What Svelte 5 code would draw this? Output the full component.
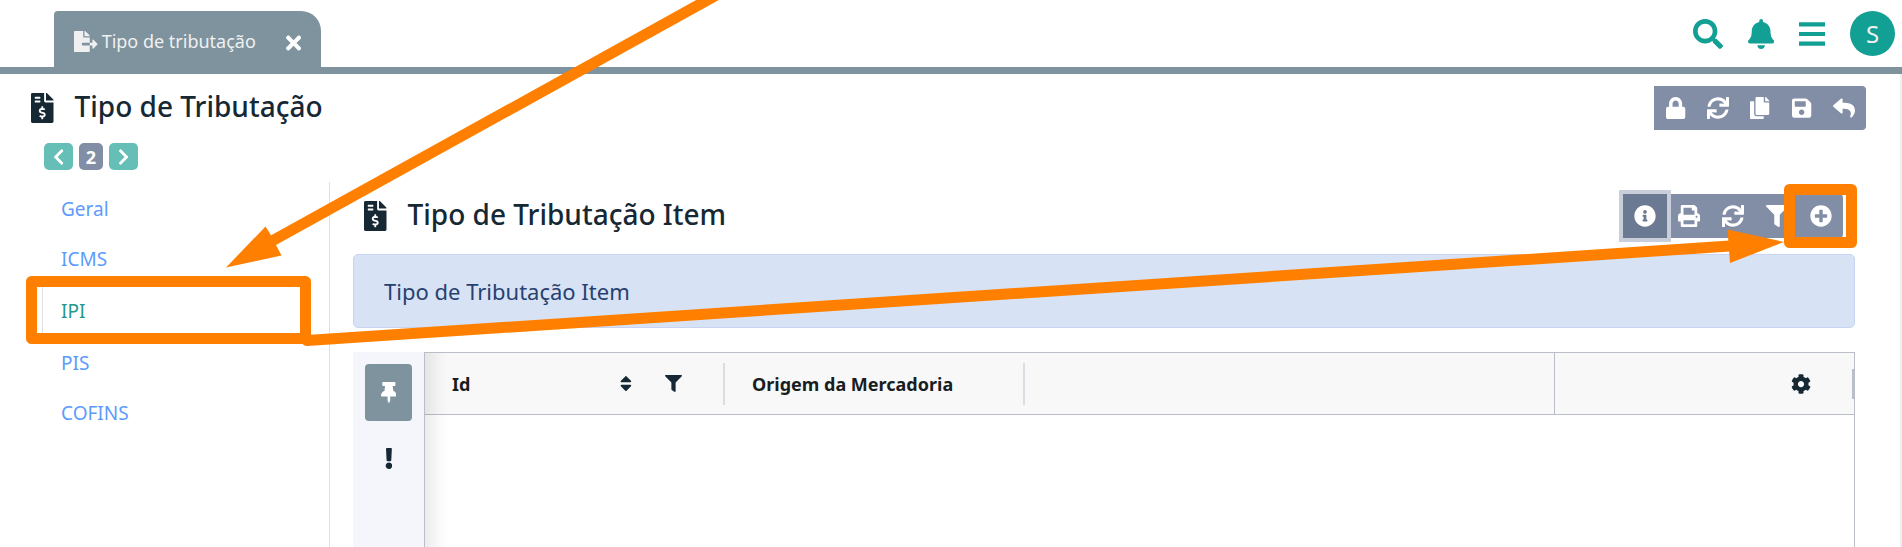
<script>
  const icons = {
    fileExport: { w: 576, d: 'M384 121.9c0-6.3-2.5-12.4-7-16.9L279.1 7c-4.5-4.500-10.600-7-17-7H256v128h128zM571 308l-95.700-96.400c-10.100-10.100-27.400-3-27.400 11.300V288h-64v64h64v65.200c0 14.300 17.300 21.400 27.400 11.300L571 332c6.600-6.600 6.600-17.400 0-24zm-379 28v-32c0-8.800 7.200-16 16-16h176V160H248c-13.200 0-24-10.800-24-24V0H24C10.700 0 0 10.700 0 24v464c0 13.300 10.700 24 24 24h336c13.300 0 24-10.700 24-24V352H208c-8.800 0-16-7.200-16-16z' },
    close: { w: 352, d: 'M242.72 256l100.07-100.07c12.28-12.28 12.28-32.19 0-44.48l-22.24-22.24c-12.28-12.28-32.19-12.28-44.48 0L176 189.28 75.93 89.21c-12.28-12.28-32.19-12.28-44.48 0L9.21 111.45c-12.28 12.28-12.28 32.19 0 44.48L109.28 256 9.21 356.07c-12.28 12.28-12.28 32.19 0 44.48l22.24 22.24c12.28 12.28 32.2 12.28 44.48 0L176 322.72l100.07 100.07c12.28 12.28 32.2 12.28 44.48 0l22.24-22.24c12.28-12.28 12.28-32.19 0-44.48L242.72 256z' },
    search: { w: 512, d: 'M505 442.7L405.3 343c-4.5-4.5-10.6-7-17-7H372c27.6-35.3 44-79.700 44-128C416 93.100 322.900 0 208 0S0 93.100 0 208s93.100 208 208 208c48.300 0 92.700-16.400 128-44v16.300c0 6.400 2.500 12.500 7 17l99.700 99.700c9.400 9.400 24.600 9.400 33.900 0l28.300-28.300c9.400-9.400 9.400-24.600.1-34zM208 336c-70.700 0-128-57.200-128-128 0-70.700 57.200-128 128-128 70.700 0 128 57.200 128 128 0 70.700-57.200 128-128 128z' },
    bell: { w: 448, d: 'M224 512c35.320 0 63.970-28.650 63.970-64H160.030c0 35.350 28.650 64 63.970 64zm215.390-149.710c-19.320-20.760-55.470-51.990-55.470-154.290 0-77.700-54.480-139.900-127.940-155.160V32c0-17.670-14.320-32-31.980-32s-31.980 14.330-31.980 32v20.840C118.560 68.100 64.080 130.300 64.080 208c0 102.300-36.150 133.530-55.470 154.290-6 6.450-8.660 14.160-8.610 21.710.11 16.400 12.980 32 32.100 32h383.800c19.120 0 32-15.600 32.100-32 .05-7.550-2.610-15.270-8.610-21.710z' },
    bars: { w: 448, d: 'M0 56h448v72H0zM0 220h448v72H0zM0 384h448v72H0z' },
    invoice: { w: 384, d: 'M377 105L279.100 7c-4.500-4.500-10.600-7-17-7H256v128h128v-6.100c0-6.300-2.500-12.400-7-16.900zm-153 31V0H24C10.700 0 0 10.700 0 24v464c0 13.300 10.700 24 24 24h336c13.300 0 24-10.700 24-24V160H248c-13.200 0-24-10.800-24-24zM64 72c0-4.420 3.580-8 8-8h80c4.420 0 8 3.580 8 8v16c0 4.420-3.580 8-8 8H72c-4.420 0-8-3.580-8-8V72zm0 80v-16c0-4.420 3.580-8 8-8h80c4.420 0 8 3.580 8 8v16c0 4.420-3.580 8-8 8H72c-4.420 0-8-3.580-8-8zm144 263.880V440c0 4.420-3.580 8-8 8h-16c-4.420 0-8-3.580-8-8v-24.290c-11.290-.58-22.270-4.520-31.370-11.350-3.900-2.930-4.100-8.770-.57-12.140l11.750-11.210c2.770-2.640 6.890-2.760 10.130-.73 3.870 2.420 8.260 3.720 12.820 3.720h28.110c6.500 0 11.800-5.920 11.800-13.190 0-5.950-3.610-11.190-8.770-12.730l-45-13.500c-18.590-5.580-31.580-23.420-31.580-43.390 0-24.520 19.050-44.440 42.670-45.070V232c0-4.420 3.580-8 8-8h16c4.420 0 8 3.580 8 8v24.290c11.290.58 22.270 4.510 31.370 11.350 3.900 2.930 4.100 8.770.57 12.140l-11.750 11.210c-2.770 2.640-6.890 2.760-10.130.73-3.870-2.430-8.260-3.720-12.820-3.720h-28.110c-6.500 0-11.800 5.920-11.800 13.190 0 5.950 3.610 11.190 8.770 12.730l45 13.500c18.590 5.580 31.580 23.420 31.580 43.390 0 24.530-19.050 44.440-42.670 45.070z' },
    lock: { w: 448, d: 'M400 224h-24v-72C376 68.200 307.800 0 224 0S72 68.200 72 152v72H48c-26.500 0-48 21.500-48 48v192c0 26.500 21.500 48 48 48h352c26.500 0 48-21.500 48-48V272c0-26.500-21.500-48-48-48zm-104 0H152v-72c0-39.700 32.300-72 72-72s72 32.300 72 72v72z' },
    sync: { w: 512, d: 'M440.650 12.570l4 82.770A247.160 247.160 0 0 0 255.830 8C134.730 8 33.910 94.920 12.290 209.820A12 12 0 0 0 24.090 224h49.050a12 12 0 0 0 11.670-9.260 175.910 175.910 0 0 1 317-56.940l-101.460-4.860a12 12 0 0 0-12.570 12v47.410a12 12 0 0 0 12 12H500a12 12 0 0 0 12-12V12a12 12 0 0 0-12-12h-47.370a12 12 0 0 0-11.980 12.570zM255.830 432a175.610 175.610 0 0 1-146-77.800l101.800 4.870a12 12 0 0 0 12.570-12v-47.400a12 12 0 0 0-12-12H12a12 12 0 0 0-12 12V500a12 12 0 0 0 12 12h47.350a12 12 0 0 0 12-12.600l-4.150-82.570A247.170 247.170 0 0 0 255.830 504c121.110 0 221.930-86.920 243.550-201.820a12 12 0 0 0-11.800-14.180h-49.050a12 12 0 0 0-11.670 9.260A175.860 175.860 0 0 1 255.830 432z' },
    copy: { w: 448, d: 'M320 448v40c0 13.255-10.745 24-24 24H24c-13.255 0-24-10.745-24-24V120c0-13.255 10.745-24 24-24h72v296c0 30.879 25.121 56 56 56h168zm0-344V0H152c-13.255 0-24 10.745-24 24v368c0 13.255 10.745 24 24 24h272c13.255 0 24-10.745 24-24V128H344c-13.200 0-24-10.800-24-24zm120.971-31.029L375.029 7.029A24 24 0 0 0 358.059 0H352v96h96v-6.059a24 24 0 0 0-7.029-16.970z' },
    save: { w: 448, d: 'M433.941 129.941l-83.882-83.882A48 48 0 0 0 316.118 32H48C21.490 32 0 53.490 0 80v352c0 26.510 21.490 48 48 48h352c26.510 0 48-21.490 48-48V163.882a48 48 0 0 0-14.059-33.941zM224 416c-35.346 0-64-28.654-64-64 0-35.346 28.654-64 64-64s64 28.654 64 64c0 35.346-28.654 64-64 64zm96-304.520V212c0 6.627-5.373 12-12 12H76c-6.627 0-12-5.373-12-12V108c0-6.627 5.373-12 12-12h228.520c3.183 0 6.235 1.264 8.485 3.515l3.480 3.480A11.996 11.996 0 0 1 320 111.480z' },
    reply: { w: 512, d: 'M8.309 189.836L184.313 37.851C199.719 24.546 224 35.347 224 56.015v80.053c160.629 1.839 288 34.032 288 186.258 0 61.441-39.581 122.309-83.333 154.132-13.653 9.931-33.111-2.533-28.077-18.631 45.344-145.012-21.507-183.510-176.590-185.742V360c0 20.700-24.300 31.453-39.687 18.164l-176.004-152c-11.071-9.562-11.086-26.753 0-36.328z' },
    info: { w: 512, d: 'M256 8C119.043 8 8 119.083 8 256c0 136.997 111.043 248 248 248s248-111.003 248-248C504 119.083 392.957 8 256 8zm0 110c23.196 0 42 18.804 42 42s-18.804 42-42 42-42-18.804-42-42 18.804-42 42-42zm56 254c0 6.627-5.373 12-12 12h-88c-6.627 0-12-5.373-12-12v-24c0-6.627 5.373-12 12-12h12v-64h-12c-6.627 0-12-5.373-12-12v-24c0-6.627 5.373-12 12-12h64c6.627 0 12 5.373 12 12v100h12c6.627 0 12 5.373 12 12v24z' },
    print: { w: 512, d: 'M448 192V77.250c0-8.490-3.370-16.620-9.370-22.630L393.370 9.370c-6-6-14.140-9.370-22.630-9.370H96C78.330 0 64 14.330 64 32v160c-35.350 0-64 28.650-64 64v112c0 8.840 7.160 16 16 16h48v96c0 17.670 14.330 32 32 32h320c17.670 0 32-14.330 32-32v-96h48c8.840 0 16-7.160 16-16V256c0-35.350-28.650-64-64-64zm-64 256H128v-96h256v96zm0-224H128V64h192v48c0 8.840 7.160 16 16 16h48v96zm48 72c-13.250 0-24-10.750-24-24 0-13.260 10.750-24 24-24s24 10.740 24 24c0 13.250-10.750 24-24 24z' },
    filter: { w: 512, d: 'M487.976 0H24.028C2.710 0-8.047 25.866 7.058 40.971L192 225.941V432c0 7.831 3.821 15.170 10.237 19.662l80 55.980C298.020 518.690 320 507.493 320 487.980V225.941l184.947-184.970C520.021 25.896 509.338 0 487.976 0z' },
    plus: { w: 512, d: 'M256 8C119 8 8 119 8 256s111 248 248 248 248-111 248-248S393 8 256 8zm144 276c0 6.600-5.400 12-12 12h-92v92c0 6.600-5.400 12-12 12h-56c-6.600 0-12-5.400-12-12v-92h-92c-6.600 0-12-5.400-12-12v-56c0-6.600 5.400-12 12-12h92v-92c0-6.600 5.400-12 12-12h56c6.600 0 12 5.400 12 12v92h92c6.600 0 12 5.400 12 12v56z' },
    pin: { w: 384, d: 'M298.028 214.267L285.793 96H328c13.255 0 24-10.745 24-24V24c0-13.255-10.745-24-24-24H56C42.745 0 32 10.745 32 24v48c0 13.255 10.745 24 24 24h42.207L85.972 214.267C37.465 236.820 0 277.261 0 328c0 13.255 10.745 24 24 24h136v104.007c0 1.242.289 2.467.845 3.578l24 48c2.941 5.882 11.364 5.893 14.311 0l24-48a8.008 8.008 0 0 0 .845-3.578V352h136c13.255 0 24-10.745 24-24-.001-51.183-37.983-91.420-85.973-113.733z' },
    exclamation: { w: 192, d: 'M176 432c0 44.112-35.888 80-80 80s-80-35.888-80-80 35.888-80 80-80 80 35.888 80 80zM25.260 25.199l13.600 272C39.499 309.972 50.041 320 62.830 320h66.340c12.789 0 23.331-10.028 23.970-22.801l13.600-272C167.425 11.490 156.496 0 142.770 0H49.230C35.504 0 24.575 11.490 25.260 25.199z' },
    sort: { w: 320, d: 'M41 288h238c21.400 0 32.100 25.900 17 41L177 448c-9.400 9.400-24.600 9.400-33.900 0L24 329c-15.100-15.100-4.400-41 17-41zm255-105L177 64c-9.400-9.400-24.600-9.400-33.900 0L24 183c-15.100 15.100-4.400 41 17 41h238c21.400 0 32.100-25.900 17-41z' },
    cog: { w: 512, d: 'M487.400 315.700l-42.600-24.600c4.300-23.200 4.300-47 0-70.200l42.600-24.600c4.900-2.800 7.100-8.600 5.500-14-11.100-35.600-30-67.800-54.700-94.600-3.800-4.100-10-5.100-14.800-2.300L380.800 110c-17.900-15.400-38.500-27.300-60.800-35.100V25.800c0-5.600-3.900-10.500-9.400-11.700-36.700-8.200-74.300-7.800-109.200 0-5.500 1.200-9.400 6.100-9.400 11.700V75c-22.200 7.900-42.800 19.800-60.800 35.100L88.700 85.500c-4.900-2.800-11-1.900-14.800 2.300-24.700 26.700-43.600 58.900-54.700 94.600-1.700 5.400.6 11.200 5.500 14L67.300 221c-4.300 23.200-4.300 47 0 70.200l-42.600 24.600c-4.900 2.800-7.100 8.600-5.500 14 11.100 35.600 30 67.800 54.700 94.600 3.800 4.100 10 5.100 14.800 2.300l42.600-24.600c17.900 15.400 38.500 27.300 60.800 35.100v49.200c0 5.600 3.900 10.500 9.400 11.700 36.700 8.200 74.300 7.800 109.200 0 5.500-1.200 9.400-6.100 9.400-11.700v-49.200c22.200-7.900 42.800-19.800 60.800-35.100l42.600 24.600c4.900 2.800 11 1.900 14.800-2.300 24.700-26.700 43.600-58.900 54.700-94.600 1.500-5.500-.7-11.300-5.600-14.100zM256 336c-44.100 0-80-35.900-80-80s35.900-80 80-80 80 35.900 80 80-35.900 80-80 80z' },
    left: { w: 320, d: 'M34.520 239.030L228.870 44.690c9.370-9.370 24.570-9.370 33.940 0l22.670 22.670c9.360 9.360 9.370 24.520.04 33.900L131.490 256l154.020 154.750c9.340 9.380 9.320 24.540-.04 33.900l-22.670 22.670c-9.370 9.370-24.570 9.370-33.940 0L34.520 272.970c-9.370-9.370-9.370-24.570 0-33.940z' },
    right: { w: 320, d: 'M285.476 272.971L91.132 467.314c-9.373 9.373-24.569 9.373-33.941 0l-22.667-22.667c-9.357-9.357-9.375-24.522-.04-33.901L188.505 256 34.484 101.255c-9.335-9.379-9.317-24.544.04-33.901l22.667-22.667c9.373-9.373 24.569-9.373 33.941 0L285.475 239.030c9.373 9.372 9.373 24.568.001 33.941z' }
  };

  const pageActions = [
    ['lock', 'Bloquear'], ['sync', 'Atualizar'], ['copy', 'Copiar'], ['save', 'Salvar'], ['reply', 'Voltar']
  ];
  const itemActions = [
    ['info', 'Informações'], ['print', 'Imprimir'], ['sync', 'Atualizar'], ['filter', 'Filtrar'], ['plus', 'Adicionar']
  ];
  const sections = ['Geral', 'ICMS', 'IPI', 'PIS', 'COFINS'];
  let active = $state('IPI');
</script>

{#snippet icon(name, size)}
  <svg class="icon" height={size} viewBox="0 0 {icons[name].w} 512" aria-hidden="true"><path d={icons[name].d} /></svg>
{/snippet}

<div class="app">
  <header class="topbar">
    <div class="tab">
      {@render icon('fileExport', 21)}
      <span class="tab-name">Tipo de tributação</span>
      <button class="plain tab-close" aria-label="Fechar">{@render icon('close', 22)}</button>
    </div>
    <div class="tools">
      <button class="plain" aria-label="Pesquisar">{@render icon('search', 30)}</button>
      <button class="plain" aria-label="Notificações">{@render icon('bell', 30)}</button>
      <button class="plain" aria-label="Menu">{@render icon('bars', 30)}</button>
      <button class="avatar">S</button>
    </div>
  </header>

  <div class="page">
    <div class="heading">
      {@render icon('invoice', 30)}
      <h1>Tipo de Tributação</h1>
      <div class="toolbar">
        {#each pageActions as [name, label]}
          <button aria-label={label}>{@render icon(name, 22)}</button>
        {/each}
      </div>
    </div>

    <div class="pager">
      <button aria-label="Anterior">{@render icon('left', 18)}</button>
      <span>2</span>
      <button aria-label="Próximo">{@render icon('right', 18)}</button>
    </div>

    <div class="columns">
      <nav>
        {#each sections as name}
          <a href="#{name}" class:active={active === name} onclick={() => (active = name)}>{name}</a>
        {/each}
      </nav>

      <main>
        <div class="heading sub">
          {@render icon('invoice', 30)}
          <h2>Tipo de Tributação Item</h2>
          <div class="toolbar wide">
            {#each itemActions as [name, label]}
              <button class:pressed={name === 'info'} aria-label={label}>{@render icon(name, 22)}</button>
            {/each}
          </div>
        </div>

        <div class="notice">Tipo de Tributação Item</div>

        <div class="grid">
          <div class="rail">
            <button class="pinned" aria-label="Fixar">{@render icon('pin', 21)}</button>
            <button class="plain" aria-label="Alertas">{@render icon('exclamation', 21)}</button>
          </div>
          <div class="sheet">
            <table>
              <colgroup><col class="c-id" /><col class="c-origin" /><col /><col class="c-config" /></colgroup>
              <thead>
                <tr>
                  <th>
                    <div class="cell">
                      <span>Id</span>
                      <button class="plain sort" aria-label="Ordenar">{@render icon('sort', 19)}</button>
                      <button class="plain" aria-label="Filtrar coluna">{@render icon('filter', 17)}</button>
                    </div>
                  </th>
                  <th><div class="cell">Origem da Mercadoria</div></th>
                  <th></th>
                  <th class="config">
                    <div class="cell end">
                      <button class="plain" aria-label="Configurar colunas">{@render icon('cog', 20)}</button>
                    </div>
                  </th>
                </tr>
              </thead>
            </table>
          </div>
        </div>
      </main>
    </div>
  </div>

  <svg class="marks" width="1902" height="547" aria-hidden="true">
    <g fill="none" stroke="#ff8000" stroke-width="11" stroke-linejoin="round">
      <rect x="31.500" y="281.500" width="274" height="57" />
      <rect x="1789.500" y="189.500" width="62" height="53" />
      <path d="M722 -8L272 241" />
      <path d="M307 340.500L1730 246" stroke-linecap="round" />
    </g>
    <g fill="#ff8000">
      <path d="M226 267.500L265.500 226.500L271.500 236L276 245L281.500 255.500Z" />
      <path d="M1784 242L1727.500 229.500L1730 263Z" />
    </g>
  </svg>
</div>

<style>
  :global(body) { margin: 0; background: #fff; }
  .app {
    position: relative;
    display: flex;
    flex-direction: column;
    min-height: 100vh;
    overflow: hidden;
    font-family: "Noto Sans", "Open Sans", sans-serif;
    font-size: 18px;
    color: #152834;
  }
  .icon { display: block; flex: none; fill: currentColor; }
  button { font: inherit; color: inherit; border: 0; padding: 0; cursor: pointer; }
  .plain { background: none; display: flex; }

  .topbar {
    display: flex;
    align-items: flex-end;
    justify-content: space-between;
    height: 67px;
    padding: 0 7px 0 54px;
    border-bottom: 7px solid #7e939e;
  }
  .tab {
    display: flex;
    align-items: center;
    height: 56px;
    padding: 4px 20px 0;
    box-sizing: border-box;
    background: #7e939e;
    color: #f0f0f0;
    border-radius: 4px 20px 0 0;
  }
  .tab-name { margin-left: 4px; }
  .tab-close { margin-left: 30px; padding-top: 4px; color: #fff; }
  .tools { display: flex; align-items: center; align-self: center; gap: 25px; color: #129f94; }
  .avatar {
    width: 45px;
    height: 45px;
    border-radius: 50%;
    background: #129f94;
    color: #f0f0f0;
    font-size: 24px;
  }

  .page {
    flex: 1;
    display: flex;
    flex-direction: column;
    border-right: 2px solid #efeff1;
  }
  .heading { display: flex; align-items: center; padding: 12px 34px 0 31px; }
  h1, h2 { margin: 0 0 0 21px; padding-bottom: 4px; font-size: 28px; line-height: 40px; font-weight: 500; }
  .toolbar {
    display: flex;
    margin-left: auto;
    padding: 0 1px;
    height: 44px;
    background: #828ea5;
    color: #fff;
    border-radius: 0 4px 4px 0;
  }
  .toolbar button {
    display: flex;
    align-items: center;
    justify-content: center;
    width: 42px;
    background: none;
  }
  .toolbar.wide { padding: 0; }
  .toolbar.wide button { width: 44px; }
  .toolbar .pressed { background: #6b7a92; box-shadow: 0 0 0 4px #c9cfda; }

  .pager { display: flex; gap: 6px; padding: 13px 44px 12px; }
  .pager button, .pager span {
    display: flex;
    align-items: center;
    justify-content: center;
    width: 29px;
    height: 27px;
    border-radius: 5px;
    background: #65bfb7;
    color: #fff;
  }
  .pager span { width: 24px; background: #828ea5; font-weight: 700; }

  .columns { flex: 1; display: flex; }
  nav {
    display: flex;
    flex-direction: column;
    width: 287px;
    padding-top: 2px;
    margin-left: 42px;
    border-right: 1px solid #dee2e6;
  }
  nav a {
    padding: 0 18px;
    border: 1px solid transparent;
    border-right: 0;
    border-radius: 4px 0 0 4px;
    line-height: 48px;
    font-size: 19px;
    color: #5c9bfd;
    text-decoration: none;
  }
  nav a.active { line-height: 52px; border-left-color: #dee2e6; color: #23988d; }

  main { flex: 1; display: flex; flex-direction: column; padding: 0 45px 0 23px; }
  .heading.sub { padding: 12px 12px 0 11px; }
  .notice {
    margin-top: 16px;
    padding: 0 30px;
    border: 1px solid #c8d4f1;
    border-radius: 5px;
    background: #d8e2f5;
    color: #26416f;
    font-size: 22px;
    line-height: 72px;
  }
  .grid { flex: 1; display: flex; margin-top: 24px; }
  .rail {
    display: flex;
    flex-direction: column;
    align-items: center;
    gap: 27px;
    width: 71px;
    padding-top: 12px;
    background: #f4f6fb;
  }
  .pinned {
    display: flex;
    align-items: center;
    justify-content: center;
    width: 47px;
    height: 57px;
    border-radius: 4px;
    background: #7e939e;
    color: #fff;
  }
  .sheet {
    position: relative;
    flex: 1;
    border: 1px solid #babfc7;
    border-bottom: 0;
  }
  .sheet::before {
    content: "";
    position: absolute;
    inset: 0 auto 0 0;
    width: 24px;
    background: linear-gradient(to right, rgba(0, 0, 0, 0.08), rgba(0, 0, 0, 0.02) 60%, transparent);
  }
  table { width: 100%; border-collapse: collapse; table-layout: fixed; background: #f8f8f8; }
  .c-id, .c-origin { width: 300px; }
  .c-config { width: 300px; }
  th {
    padding: 0;
    height: 61px;
    border-bottom: 1px solid #babfc7;
    text-align: left;
    color: #181d1f;
    font-weight: 700;
  }
  .cell {
    display: flex;
    align-items: center;
    height: 42px;
    padding: 0 41px 0 27px;
    border-right: 2px solid #dadde2;
    white-space: nowrap;
  }
  .cell button { color: #152834; }
  .sort { margin: 0 33px 0 auto; }
  .config { border-left: 1px solid #babfc7; }
  .cell.end { justify-content: flex-end; height: 30px; border-color: #babfc7; }

  .marks { position: absolute; top: 0; left: 0; pointer-events: none; }
</style>
